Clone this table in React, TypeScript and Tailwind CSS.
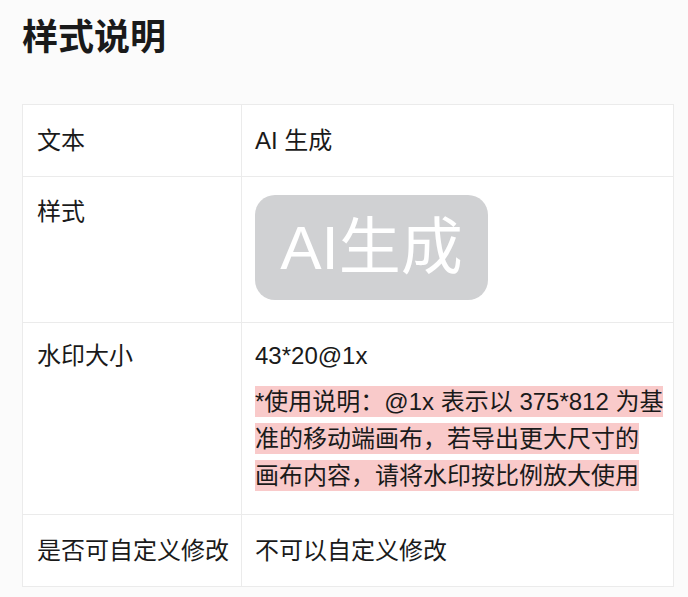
import React from "react";

const font = { fontFamily: '"Liberation Sans", "Noto Sans CJK SC", sans-serif' };

export default function App() {
  return (
    <div className="min-h-screen bg-[#fbfbfb] px-[22px] pt-[16px] pb-[10px] text-[#1a1a1a]" style={font}>
      <h1 className="text-[36px] leading-[44px] font-bold">样式说明</h1>
      <div className="mt-[44px] w-[652px] border border-[#ebebeb] bg-white text-[24px] leading-[36px]">
        <div className="grid grid-cols-[219px_1fr]">
          <div className="border-r border-[#ebebeb] pl-[14px] pt-[18px] pb-[17px]">文本</div>
          <div className="pl-[13px] pt-[18px] pb-[17px]">AI 生成</div>
        </div>
        <div className="grid grid-cols-[219px_1fr] border-t border-[#ebebeb]">
          <div className="border-r border-[#ebebeb] pl-[14px] pt-[17px]">样式</div>
          <div className="pl-[13px] pt-[18px] pb-[22px]">
            <div className="flex h-[105px] w-[233px] items-center justify-center rounded-[20px] bg-[#d0d1d3] text-[62px] leading-none text-white">
              AI生成
            </div>
          </div>
        </div>
        <div className="grid grid-cols-[219px_1fr] border-t border-[#ebebeb]">
          <div className="border-r border-[#ebebeb] pl-[14px] pt-[15px]">水印大小</div>
          <div className="pl-[13px] pt-[15px] pb-[20px]">
            <div>43*20@1x</div>
            <div className="mt-[9px] whitespace-nowrap leading-[37px]">
              <span className="bg-[#f9caca] py-[2px]">*使用说明：@1x 表示以 375*812 为基</span>
              <br />
              <span className="bg-[#f9caca] py-[2px]">准的移动端画布，若导出更大尺寸的</span>
              <br />
              <span className="bg-[#f9caca] py-[2px]">画布内容，请将水印按比例放大使用</span>
            </div>
          </div>
        </div>
        <div className="grid grid-cols-[219px_1fr] border-t border-[#ebebeb]">
          <div className="border-r border-[#ebebeb] pl-[14px] pt-[18px] pb-[17px]">是否可自定义修改</div>
          <div className="pl-[13px] pt-[18px] pb-[17px]">不可以自定义修改</div>
        </div>
      </div>
    </div>
  );
}
